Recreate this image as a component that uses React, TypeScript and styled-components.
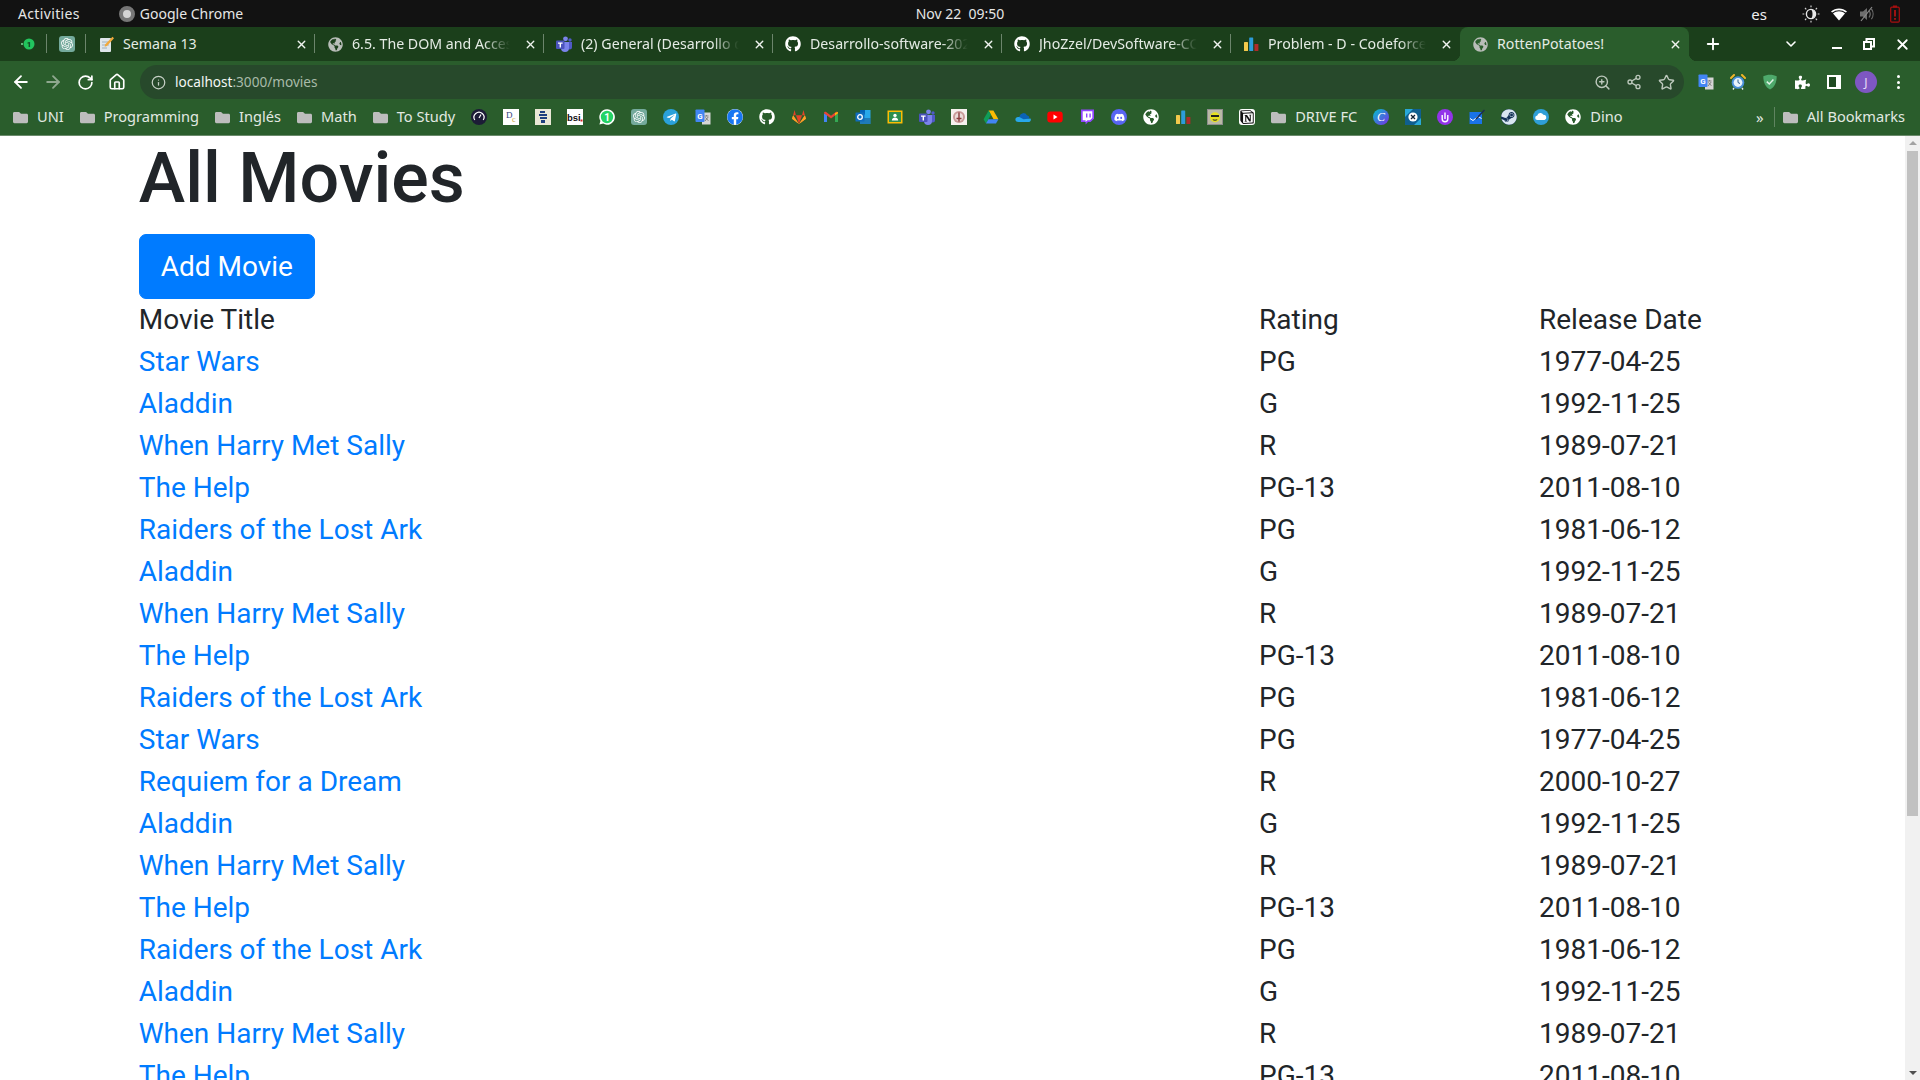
import React from "react";
import styled, { createGlobalStyle } from "styled-components";
import {
  FaDiscord,
  FaFacebook,
  FaFolder,
  FaGithub,
  FaGlobeAmericas,
  FaPuzzlePiece,
  FaSteam,
  FaTelegramPlane,
} from "react-icons/fa";
import { SiNotion, SiOpenai } from "react-icons/si";
import {
  ArrowLeft,
  ArrowRight,
  ChevronDown,
  Home,
  Info,
  Plus,
  RotateCw,
  Share2,
  Star,
  X,
  ZoomIn,
} from "lucide-react";

const GlobalStyle = createGlobalStyle`
  html, body {
    margin: 0;
    padding: 0;
    background: #fff;
    overflow: hidden;
  }
`;

const uiFont = `"Noto Sans", "Open Sans", sans-serif`;

const Screen = styled.div`
  width: 1920px;
  height: 1080px;
  display: flex;
  flex-direction: column;
  overflow: hidden;
  font-family: ${uiFont};
`;

/* ---- desktop top bar ---- */

const TopBar = styled.div`
  height: 27px;
  flex: none;
  display: grid;
  grid-template-columns: 1fr auto 1fr;
  align-items: center;
  background: #121212;
  color: #e6e6e6;
  font-size: 14px;
`;

const TopLeft = styled.div`
  display: flex;
  align-items: center;
  padding-left: 18px;
`;

const Activities = styled.span`
  letter-spacing: 0.35px;
`;

const AppName = styled.div`
  display: flex;
  align-items: center;
  gap: 5px;
  margin-left: 39px;
`;

const AppDot = styled.span`
  width: 16px;
  height: 16px;
  box-sizing: border-box;
  border-radius: 50%;
  background: #d4d4d4;
  border: 4px solid #777;
`;

const TopRight = styled.div`
  display: flex;
  align-items: center;
  justify-content: flex-end;
  padding-right: 11px;
`;

const Lang = styled.span`
  margin-right: 30px;
  color: #eee;
  font-size: 15px;
`;

const TrayIcon = styled.span`
  width: 28px;
  height: 18px;
  display: flex;
  align-items: center;
  justify-content: center;
`;

/* ---- tab strip ---- */

const TabStrip = styled.div`
  height: 34px;
  flex: none;
  display: flex;
  align-items: stretch;
  padding-left: 8px;
  background: #1b3f1b;
  color: #e4ebe4;
  font-size: 14.2px;
`;

const PinnedTab = styled.div`
  width: 39px;
  flex: none;
  display: flex;
  align-items: center;
  justify-content: center;
  position: relative;
  &::after {
    content: "";
    position: absolute;
    right: 0;
    top: 7px;
    bottom: 8px;
    width: 1px;
    background: #6c856c;
  }
`;

const Tab = styled.div<{ $active?: boolean; $last?: boolean }>`
  width: 229px;
  flex: none;
  box-sizing: border-box;
  display: flex;
  align-items: center;
  gap: 9px;
  padding: 0 6px 0 12px;
  position: relative;
  background: ${(p) => (p.$active ? "#2a5d2c" : "transparent")};
  border-radius: ${(p) => (p.$active ? "8px 8px 0 0" : "0")};

  &::after {
    content: "";
    display: ${(p) => (p.$last || p.$active ? "none" : "block")};
    position: absolute;
    right: 0;
    top: 7px;
    bottom: 8px;
    width: 1px;
    background: #6c856c;
  }
`;

const TabCorner = styled.span<{ $side: "left" | "right" }>`
  position: absolute;
  bottom: 0;
  ${(p) => p.$side}: -8px;
  width: 8px;
  height: 8px;
  background: radial-gradient(
    circle at ${(p) => (p.$side === "left" ? "0 0" : "100% 0")},
    transparent 8px,
    #2a5d2c 8.5px
  );
`;

const TabTitle = styled.span<{ $fade?: boolean }>`
  flex: 1;
  min-width: 0;
  padding-bottom: 2px;
  overflow: hidden;
  white-space: nowrap;
  ${(p) =>
    p.$fade &&
    `
    -webkit-mask-image: linear-gradient(to right, #000 82%, transparent 98%);
    mask-image: linear-gradient(to right, #000 82%, transparent 98%);
  `}
`;

const TabClose = styled.span`
  width: 16px;
  height: 16px;
  flex: none;
  display: flex;
  align-items: center;
  justify-content: center;
  color: #f0f4f0;
`;

const NewTab = styled.span`
  width: 30px;
  margin-left: 9px;
  display: flex;
  align-items: center;
  justify-content: center;
  color: #fff;
`;

const WindowControls = styled.div`
  margin-left: auto;
  display: flex;
  align-items: center;
  color: #fff;
`;

const WindowButton = styled.span<{ $width: number }>`
  width: ${(p) => p.$width}px;
  display: flex;
  align-items: center;
  justify-content: center;
`;

const MinimizeIcon = styled.span`
  width: 10px;
  height: 2px;
  margin-top: 7px;
  background: #fff;
`;

/* ---- address toolbar ---- */

const Toolbar = styled.div`
  height: 39px;
  flex: none;
  box-sizing: border-box;
  display: flex;
  align-items: flex-start;
  padding-top: 4px;
  background: #2a5d2c;
  color: #fff;
`;

const NavButton = styled.span<{ $dim?: boolean }>`
  width: 32px;
  height: 34px;
  flex: none;
  display: flex;
  align-items: center;
  justify-content: center;
  color: ${(p) => (p.$dim ? "#8fa88f" : "#fff")};
`;

const OmniAction = styled(NavButton)`
  color: inherit;
`;

const NavGroup = styled.div`
  display: flex;
  padding-left: 5px;
`;

const Omnibox = styled.div`
  width: 1544px;
  height: 34px;
  flex: none;
  margin-left: 7px;
  box-sizing: border-box;
  display: flex;
  align-items: center;
  padding-left: 10px;
  border-radius: 17px;
  background: #27492b;
  font-size: 13.6px;
  color: #a9bba9;
`;

const SiteInfo = styled.span`
  width: 16px;
  height: 16px;
  margin-right: 9px;
  display: flex;
  align-items: center;
  justify-content: center;
  color: #c6d0c6;
`;

const UrlText = styled.span`
  padding-bottom: 1px;
`;

const Host = styled.span`
  color: #f4f7f4;
`;

const OmniActions = styled.div`
  margin-left: auto;
  padding-right: 2px;
  display: flex;
  color: #bcc8bc;
`;

const Extensions = styled.div`
  display: flex;
  margin-left: 6px;
`;

const Avatar = styled.span`
  width: 22px;
  height: 22px;
  border-radius: 50%;
  background: #7e57c2;
  color: #e8def8;
  font-size: 12px;
  display: flex;
  align-items: center;
  justify-content: center;
`;

const SidePanelIcon = styled.span`
  width: 14px;
  height: 14px;
  box-sizing: border-box;
  background: #1f4a21;
  border: 2px solid #fff;
  border-right-width: 5px;
`;

const MenuDots = styled.span`
  display: flex;
  flex-direction: column;
  gap: 2.5px;
  & > i {
    width: 3px;
    height: 3px;
    border-radius: 50%;
    background: #fff;
  }
`;

/* ---- bookmarks ---- */

const Bookmarks = styled.div`
  height: 36px;
  flex: none;
  box-sizing: border-box;
  display: flex;
  align-items: center;
  padding: 0 7px 1px 5px;
  background: #2a5d2c;
  border-bottom: 1px solid #6a8a6b;
  color: #e2e9e2;
  font-size: 14.6px;
`;

const Bookmark = styled.span`
  display: flex;
  align-items: center;
  gap: 9px;
  padding: 0 8px;
  white-space: nowrap;
`;

const BookmarkLabel = styled.span`
  padding-bottom: 2px;
`;

const BookmarkIcon = styled.span`
  width: 32px;
  height: 16px;
  flex: none;
  display: flex;
  align-items: center;
  justify-content: center;
`;

const Folder = styled(FaFolder)`
  width: 15px;
  height: 15px;
  color: #bdbdbd;
  flex: none;
`;

const BookmarksEnd = styled.div`
  margin-left: auto;
  display: flex;
  align-items: center;
`;

const Chevrons = styled.span`
  width: 18px;
  text-align: center;
  font-size: 15px;
`;

const BarDivider = styled.span`
  width: 1px;
  height: 20px;
  margin: 0 0 0 5px;
  background: #5f8460;
`;

const Fav = styled.span`
  width: 16px;
  height: 16px;
  flex: none;
  display: flex;
  align-items: center;
  justify-content: center;
`;

const BadgeIcon = styled.span<{ $bg: string; $radius?: string }>`
  width: 16px;
  height: 16px;
  flex: none;
  display: flex;
  align-items: center;
  justify-content: center;
  color: #fff;
  background: ${(p) => p.$bg};
  border-radius: ${(p) => p.$radius ?? "50%"};
`;

/* ---- page ---- */

const Body = styled.div`
  flex: 1;
  min-height: 0;
  display: flex;
`;

const Page = styled.div`
  flex: 1;
  min-width: 0;
  overflow: hidden;
  background: #fff;
  font-family: Roboto, "Liberation Sans", sans-serif;
  color: #212529;
  font-size: 28px;
  line-height: 1.5;
`;

const Container = styled.div`
  width: 1680px;
  box-sizing: border-box;
  margin: 0 auto;
  padding: 0 26.25px;
`;

const Heading = styled.h1`
  margin: 0 0 14px;
  font-size: 70px;
  font-weight: 500;
  line-height: 1.2;
`;

const AddButton = styled.a`
  display: inline-block;
  vertical-align: top;
  padding: 10.5px 21px;
  border: 1.75px solid #007bff;
  border-radius: 7px;
  background: #007bff;
  color: #fff;
`;

const MovieTable = styled.table`
  width: 100%;
  table-layout: fixed;
  border-collapse: collapse;

  th,
  td {
    padding: 0;
    font-weight: 400;
    text-align: left;
    white-space: nowrap;
  }

  th:nth-child(1) {
    width: 1120.25px;
  }
  th:nth-child(2) {
    width: 280px;
  }
`;

const MovieLink = styled.a`
  color: #007bff;
`;

const Scrollbar = styled.div`
  width: 15px;
  flex: none;
  display: flex;
  flex-direction: column;
  align-items: center;
  background: #f1f1f1;
  position: relative;
`;

const ScrollArrow = styled.span<{ $down?: boolean }>`
  position: absolute;
  ${(p) => (p.$down ? "bottom: 5px;" : "top: 5px;")}
  width: 0;
  height: 0;
  border-left: 4px solid transparent;
  border-right: 4px solid transparent;
  ${(p) => (p.$down ? "border-top: 4px solid #505050;" : "border-bottom: 4px solid #a3a3a3;")}
`;

const ScrollThumb = styled.div`
  width: 11px;
  height: 665px;
  margin-top: 15px;
  background: #c1c1c1;
`;

/* ---- drawn icons ---- */

const Icon16: React.FC<{ children: React.ReactNode }> = ({ children }) => (
  <svg width="16" height="16" viewBox="0 0 16 16">
    {children}
  </svg>
);

const RestoreIcon = () => (
  <svg width="12" height="12" viewBox="0 0 12 12">
    <path d="M3.5 3V1h7.5v7.5H9" fill="none" stroke="#fff" strokeWidth="2" />
    <rect x="1" y="4" width="7" height="7" fill="none" stroke="#fff" strokeWidth="2" />
  </svg>
);

const ChatGpt = () => (
  <BadgeIcon $bg="#74aa9c" $radius="3px">
    <SiOpenai size={12} />
  </BadgeIcon>
);

const Teams = () => (
  <Icon16>
    <circle cx="9.5" cy="2.8" r="2.4" fill="#7b83eb" />
    <circle cx="14" cy="4" r="1.7" fill="#5059c9" />
    <path d="M11 6h5v5a2.5 2.5 0 0 1-5 0z" fill="#5059c9" />
    <path d="M5 6h8v6a4 4 0 0 1-8 0z" fill="#7b83eb" />
    <rect x="0" y="4.5" width="8.5" height="8.5" rx="1" fill="#4b53bc" />
    <path d="M2 6.5h4.6v1.2H5v3.9H3.6V7.7H2z" fill="#fff" />
  </Icon16>
);

const ChartBars = () => (
  <Icon16>
    <rect x="1" y="6" width="4" height="9" rx="0.6" fill="#f2c94c" />
    <rect x="6.2" y="1.5" width="4" height="13.5" rx="0.6" fill="#2d9cdb" />
    <rect x="11.4" y="8" width="4" height="7" rx="0.6" fill="#b02a2a" />
  </Icon16>
);

const Globe = () => <FaGlobeAmericas size={15} color="#b8bdb8" />;

const WhiteGlobe = () => <FaGlobeAmericas size={16} color="#fff" />;

const GTranslate = () => (
  <Icon16>
    <rect x="7" y="3.5" width="8.5" height="12" fill="#d6d6d6" />
    <path d="M9.5 7h4M11.5 6v1M10 12l3.2-4M10.4 8.4l3 3.4" stroke="#777" strokeWidth="0.9" fill="none" />
    <rect x="0.5" y="0.5" width="9" height="12.5" rx="0.8" fill="#4285f4" />
    <text x="5" y="10" textAnchor="middle" fontSize="8" fontWeight="700" fill="#fff" fontFamily="Roboto, sans-serif">
      G
    </text>
  </Icon16>
);

const Facebook = () => (
  <BadgeIcon $bg="#fff">
    <FaFacebook size={16} color="#1877f2" />
  </BadgeIcon>
);

const Gitlab = () => (
  <Icon16>
    <path d="M8 15 1 9.8l1.1-3.6z" fill="#fc6d26" />
    <path d="M8 15 15 9.8l-1.1-3.6z" fill="#fc6d26" />
    <path d="M8 15 4.9 6.2h6.2z" fill="#e24329" />
    <path d="M2.1 6.2 3.6 1l1.3 5.2z" fill="#e24329" />
    <path d="M13.9 6.2 12.4 1l-1.3 5.2z" fill="#e24329" />
    <path d="M1 9.8 8 15 2.1 6.2z" fill="#fca326" />
    <path d="M15 9.8 8 15l5.9-8.8z" fill="#fca326" />
  </Icon16>
);

const Gmail = () => (
  <Icon16>
    <path d="M1 13V4.2L4 6v7z" fill="#4285f4" />
    <path d="M15 13V4.2L12 6v7z" fill="#34a853" />
    <path d="M1 4.2C1 2.8 2.4 2.4 3.2 3L8 6.8 12.8 3c.8-.6 2.2-.2 2.2 1.2L12 6.5 8 9.6 4 6.5z" fill="#ea4335" />
    <path d="M12 6.5l3-2.3V2.9L12 4z" fill="#fbbc04" />
  </Icon16>
);

const Outlook = () => (
  <Icon16>
    <rect x="5" y="1" width="10.5" height="14" fill="#28a8ea" />
    <rect x="5" y="1" width="5" height="4.5" fill="#0364b8" />
    <path d="M5 9h10.5v6H5z" fill="#14447d" opacity="0.45" />
    <rect x="0.5" y="3.5" width="9" height="9" rx="0.6" fill="#0f6cbd" />
    <circle cx="5" cy="8" r="2.3" fill="none" stroke="#fff" strokeWidth="1.3" />
  </Icon16>
);

const Classroom = () => (
  <Icon16>
    <rect x="0.5" y="1.5" width="15" height="13" fill="#fbbc04" />
    <rect x="2" y="3" width="12" height="10" fill="#2f8f4e" />
    <circle cx="8" cy="6.4" r="1.7" fill="#fff" />
    <path d="M4.8 11.4c.3-2 1.6-2.8 3.2-2.8s2.9.8 3.2 2.8z" fill="#fff" />
  </Icon16>
);

const UniSeal = () => (
  <Icon16>
    <rect width="16" height="16" fill="#f6f1ee" />
    <circle cx="8" cy="8" r="6" fill="#c99a98" />
    <circle cx="8" cy="8" r="4" fill="#eadbd9" />
    <path d="M8 3.5v9M5.5 9.5h5" stroke="#8a3b3b" strokeWidth="1.4" />
  </Icon16>
);

const Drive = () => (
  <Icon16>
    <path d="M5.6 1.5h4.8l5 8.8h-4.8z" fill="#fbbc04" />
    <path d="M5.6 1.5.6 10.3 3 14.5l5-8.7z" fill="#0f9d58" />
    <path d="M3 14.5h10l2.4-4.2H5.4z" fill="#4285f4" />
  </Icon16>
);

const OneDrive = () => (
  <Icon16>
    <path d="M4.5 7.2a4 4 0 0 1 7.4-1 3 3 0 0 1 2.4 3.2L8 11 3.5 9z" fill="#0b63b6" />
    <path d="M3.6 13C1.8 13 .4 11.9.4 10.4S1.7 7.8 3.3 7.9c1-.1 1.9.2 2.8 1l2.5 1.4 6.8-.7c.5.3.6.9.4 1.6-.3.9-1.1 1.8-2.3 1.8z" fill="#28a8ea" />
  </Icon16>
);

const YouTube = () => (
  <Icon16>
    <rect x="0.3" y="2.5" width="15.4" height="11" rx="3" fill="#f00" />
    <path d="M6.5 5.6v4.8L10.5 8z" fill="#fff" />
  </Icon16>
);

const Twitch = () => (
  <Icon16>
    <path d="M2 .5h13v9.2L11.5 13H9l-2.4 2.4V13H2z" fill="#9146ff" />
    <path d="M3.7 2.2h9.6v6.7l-2.5 2.4H8.4L6.6 13v-1.7H3.7z" fill="#fff" />
    <path d="M7 4.4h1.4v4H7zM10.4 4.4h1.4v4h-1.4z" fill="#9146ff" />
  </Icon16>
);

const RoundBadge: React.FC<{ bg: string; children: React.ReactNode }> = ({ bg, children }) => (
  <Icon16>
    <circle cx="8" cy="8" r="8" fill={bg} />
    {children}
  </Icon16>
);

const Gauge = () => (
  <RoundBadge bg="#1c1c36">
    <path d="M3.8 11a5 5 0 1 1 8.4 0" fill="none" stroke="#fff" strokeWidth="1.2" />
    <path d="M8 9l2-3.5" stroke="#fff" strokeWidth="1.2" />
  </RoundBadge>
);

const Dc = () => (
  <Icon16>
    <rect width="16" height="16" fill="#fff" />
    <text x="3" y="9" fontSize="9" fill="#32427a" fontFamily="Liberation Serif, serif">
      D
    </text>
    <text x="9" y="13" fontSize="8" fill="#c7a43a" fontFamily="Liberation Serif, serif">
      c
    </text>
  </Icon16>
);

const Stack = () => (
  <Icon16>
    <rect width="16" height="16" fill="#e9e7d6" />
    <path d="M5 2h5v2H5zM4 5h8v2H4zM5 8h7v2H5zM6 11h4v3H6z" fill="#1f3f7f" />
  </Icon16>
);

const Bsi = () => (
  <Icon16>
    <rect width="16" height="16" fill="#fff" />
    <text x="0" y="12" fontSize="9.5" fontWeight="700" fill="#111" fontFamily="Liberation Sans, sans-serif">
      bsi
    </text>
    <rect x="13.5" y="10.5" width="2" height="2" fill="#d22" />
  </Icon16>
);

const WhatsApp = () => (
  <Icon16>
    <path d="M8 .3a7.7 7.7 0 0 0-6.6 11.6L.4 15.6l3.8-1A7.7 7.7 0 1 0 8 .3z" fill="#fff" />
    <circle cx="8" cy="8" r="6.2" fill="#25d366" />
    <text x="8" y="11.5" textAnchor="middle" fontSize="10" fontWeight="700" fill="#fff" fontFamily="Roboto, sans-serif">
      1
    </text>
  </Icon16>
);

const NotifyDot = () => (
  <Icon16>
    <circle cx="9" cy="8" r="5.5" fill="#22c55e" />
    <circle cx="2" cy="8" r="1" fill="#7ddc9a" />
    <text x="9" y="11" textAnchor="middle" fontSize="8" fontWeight="700" fill="#0d3d1b" fontFamily="Roboto, sans-serif">
      1
    </text>
  </Icon16>
);

const Notepad = () => (
  <Icon16>
    <rect x="2" y="2" width="11" height="14" rx="1" fill="#dfe6ea" />
    <path d="M4 6h7M4 9h7M4 12h5" stroke="#9fb0ba" strokeWidth="1" />
    <path d="M14.5.8 16 2.3 9 10l-2.4.8.7-2.5z" fill="#f2a93b" />
  </Icon16>
);

const FaceBox = () => (
  <Icon16>
    <rect width="16" height="16" fill="#8d8d8d" />
    <rect x="1" y="1" width="14" height="14" fill="#b9b9a5" />
    <circle cx="8" cy="8.2" r="5" fill="#e6e020" />
    <rect x="4" y="6" width="8" height="2" fill="#222" />
    <path d="M5.8 10.6c1.4.8 3 .8 4.4 0" stroke="#222" fill="none" />
  </Icon16>
);

const Canva = () => (
  <Icon16>
    <defs>
      <linearGradient id="canva" x1="0" y1="0" x2="1" y2="1">
        <stop offset="0" stopColor="#00c4cc" />
        <stop offset="1" stopColor="#7d2ae8" />
      </linearGradient>
    </defs>
    <circle cx="8" cy="8" r="8" fill="url(#canva)" />
    <text x="8" y="12" textAnchor="middle" fontSize="12" fontStyle="italic" fill="#fff" fontFamily="Liberation Serif, serif">
      C
    </text>
  </Icon16>
);

const XBox = () => (
  <Icon16>
    <rect width="16" height="16" fill="#0f5f8f" />
    <path d="M0 0h8L0 8zM16 16H9l7-7z" fill="#29a8d8" />
    <circle cx="8" cy="8" r="4.6" fill="#fff" />
    <path d="M6 6l4 4M10 6l-4 4" stroke="#123" strokeWidth="1.3" />
  </Icon16>
);

const Upword = () => (
  <RoundBadge bg="#9333ea">
    <path d="M5.2 6v4a2.8 2.8 0 0 0 5.6 0V6" fill="none" stroke="#fff" strokeWidth="1.4" />
    <path d="M8 3.5V10" stroke="#fff" strokeWidth="1.4" />
  </RoundBadge>
);

const TaskBox = () => (
  <Icon16>
    <rect x="0.5" y="3" width="12.5" height="12" fill="#1a73e8" />
    <path d="M1 9.5l3 2 5-4 3.5 2" fill="none" stroke="#fff" strokeWidth="1" />
    <path d="M7 10 15.5 1" stroke="#1d2b4f" strokeWidth="1.4" />
  </Icon16>
);

const SteamRound = () => (
  <BadgeIcon $bg="#123257">
    <FaSteam size={16} color="#d8e6f0" />
  </BadgeIcon>
);

const CloudRound = () => (
  <RoundBadge bg="#2f9fd8">
    <path d="M4.5 11a2.2 2.2 0 0 1-.2-4.4 3.2 3.2 0 0 1 6-.8 2.7 2.7 0 0 1 1.3 5.2z" fill="#fff" />
  </RoundBadge>
);

const NotionBox = () => (
  <BadgeIcon $bg="#fff" $radius="3px">
    <SiNotion size={14} color="#111" />
  </BadgeIcon>
);

const Alarm = () => (
  <Icon16>
    <path d="M1 4l3-3M15 4l-3-3" stroke="#f0b429" strokeWidth="2" strokeLinecap="round" />
    <path d="M4 14l-1 1.5M12 14l1 1.5" stroke="#e6eef5" strokeWidth="1.4" />
    <circle cx="8" cy="8.5" r="6.3" fill="#4a90d9" />
    <circle cx="8" cy="8.5" r="4.4" fill="#eaf3fb" />
    <path d="M8 5.5v3l2 1" stroke="#2c5f8f" strokeWidth="1" fill="none" />
  </Icon16>
);

const Shield = () => (
  <Icon16>
    <path d="M8 .7C5.6.7 3 1.3 1.3 2.3 1.3 9 3.6 13.4 8 15.5c4.4-2.1 6.7-6.5 6.7-13.2C13 1.3 10.4.7 8 .7z" fill="#4ea96b" />
    <path d="M4.8 7.6 7.3 10l4.1-4.4" fill="none" stroke="#dff3e5" strokeWidth="1.5" />
  </Icon16>
);

const SunMoon = () => (
  <svg width="18" height="18" viewBox="0 0 18 18">
    <circle cx="9" cy="9" r="4.6" fill="none" stroke="#e8e8e8" strokeWidth="1.4" />
    <path d="M9 4.4a4.6 4.6 0 0 1 0 9.2c2-1.5 2-7.7 0-9.2z" fill="#e8e8e8" />
    <path
      d="M9 .5v1.8M9 15.7v1.8M.5 9h1.8M15.7 9h1.8M3 3l1.3 1.3M13.7 13.7 15 15M3 15l1.3-1.3M13.7 4.3 15 3"
      stroke="#cfcfcf"
      strokeWidth="1.2"
    />
  </svg>
);

const WifiFan = () => (
  <svg width="18" height="14" viewBox="0 0 18 14">
    <path d="M1 4.4C5.5.4 12.5.4 17 4.4L15.9 5.6C11.9 2.3 6.1 2.3 2.1 5.6z" fill="#fff" />
    <path d="M3 6.4c3.6-2.8 8.4-2.8 12 0L9 13.4z" fill="#fff" />
  </svg>
);

const MutedSpeaker = () => (
  <svg width="16" height="16" viewBox="0 0 16 16">
    <path d="M1 5.5h3L8 2v12l-4-3.5H1z" fill="#6e6e6e" />
    <path d="M10 4.5c1.4 2 1.4 5 0 7M12.4 2.8c2.2 3 2.2 7.4 0 10.4" fill="none" stroke="#6e6e6e" strokeWidth="1.2" />
    <path d="M2 15 13 1" stroke="#8a8a8a" strokeWidth="1.2" />
  </svg>
);

const Battery = () => (
  <svg width="10" height="18" viewBox="0 0 10 18">
    <rect x="3" y="0.5" width="4" height="2" fill="#a80f0f" />
    <rect x="0.7" y="2.2" width="8.6" height="15" rx="1.2" fill="none" stroke="#a80f0f" strokeWidth="1.2" />
    <rect x="4.2" y="5" width="1.6" height="6.5" fill="#c01212" />
    <rect x="4.2" y="13" width="1.6" height="1.8" fill="#c01212" />
  </svg>
);

/* ---- data ---- */

const tabs: { title: string; icon: React.ReactNode; fade?: boolean }[] = [
  { title: "Semana 13", icon: <Notepad /> },
  { title: "6.5. The DOM and Accessing Elements", icon: <Globe />, fade: true },
  { title: "(2) General (Desarrollo de Software)", icon: <Teams />, fade: true },
  { title: "Desarrollo-software-2023/Semana", icon: <FaGithub size={16} color="#fff" />, fade: true },
  { title: "JhoZzel/DevSoftware-CC3S2-A", icon: <FaGithub size={16} color="#fff" />, fade: true },
  { title: "Problem - D - Codeforces Round", icon: <ChartBars />, fade: true },
];

const leadingFolders = ["UNI", "Programming", "Inglés", "Math", "To Study"];

const middleIcons: React.ReactNode[] = [
  <Gauge />,
  <Dc />,
  <Stack />,
  <Bsi />,
  <WhatsApp />,
  <ChatGpt />,
  <BadgeIcon $bg="#2aa1da">
    <FaTelegramPlane size={11} />
  </BadgeIcon>,
  <GTranslate />,
  <Facebook />,
  <FaGithub size={16} color="#fff" />,
  <Gitlab />,
  <Gmail />,
  <Outlook />,
  <Classroom />,
  <Teams />,
  <UniSeal />,
  <Drive />,
  <OneDrive />,
  <YouTube />,
  <Twitch />,
  <BadgeIcon $bg="#5865f2">
    <FaDiscord size={11} />
  </BadgeIcon>,
  <WhiteGlobe />,
  <ChartBars />,
  <FaceBox />,
  <NotionBox />,
];

const trailingIcons: React.ReactNode[] = [
  <Canva />,
  <XBox />,
  <Upword />,
  <TaskBox />,
  <SteamRound />,
  <CloudRound />,
];

const STAR_WARS = ["Star Wars", "PG", "1977-04-25"];
const ALADDIN = ["Aladdin", "G", "1992-11-25"];
const HARRY = ["When Harry Met Sally", "R", "1989-07-21"];
const HELP = ["The Help", "PG-13", "2011-08-10"];
const RAIDERS = ["Raiders of the Lost Ark", "PG", "1981-06-12"];
const REQUIEM = ["Requiem for a Dream", "R", "2000-10-27"];

const movies = [
  STAR_WARS, ALADDIN, HARRY, HELP, RAIDERS,
  ALADDIN, HARRY, HELP, RAIDERS, STAR_WARS,
  REQUIEM, ALADDIN, HARRY, HELP, RAIDERS,
  ALADDIN, HARRY, HELP,
];

const App: React.FC = () => (
  <>
    <GlobalStyle />
    <Screen>
      <TopBar>
        <TopLeft>
          <Activities>Activities</Activities>
          <AppName>
            <AppDot />
            Google Chrome
          </AppName>
        </TopLeft>
        <span>Nov 22&nbsp; 09:50</span>
        <TopRight>
          <Lang>es</Lang>
          <TrayIcon>
            <SunMoon />
          </TrayIcon>
          <TrayIcon>
            <WifiFan />
          </TrayIcon>
          <TrayIcon>
            <MutedSpeaker />
          </TrayIcon>
          <TrayIcon>
            <Battery />
          </TrayIcon>
        </TopRight>
      </TopBar>

      <TabStrip>
        <PinnedTab>
          <NotifyDot />
        </PinnedTab>
        <PinnedTab>
          <ChatGpt />
        </PinnedTab>
        {tabs.map((tab) => (
          <Tab key={tab.title} $last={tab === tabs[tabs.length - 1]}>
            <Fav>{tab.icon}</Fav>
            <TabTitle $fade={tab.fade}>{tab.title}</TabTitle>
            <TabClose>
              <X size={13} strokeWidth={2.5} />
            </TabClose>
          </Tab>
        ))}
        <Tab $active>
          <TabCorner $side="left" />
          <Fav>
            <Globe />
          </Fav>
          <TabTitle>RottenPotatoes!</TabTitle>
          <TabClose>
            <X size={13} strokeWidth={2.5} />
          </TabClose>
          <TabCorner $side="right" />
        </Tab>
        <NewTab>
          <Plus size={18} strokeWidth={2.5} />
        </NewTab>
        <WindowControls>
          <WindowButton $width={60}>
            <ChevronDown size={16} strokeWidth={2.4} />
          </WindowButton>
          <WindowButton $width={32}>
            <MinimizeIcon />
          </WindowButton>
          <WindowButton $width={32}>
            <RestoreIcon />
          </WindowButton>
          <WindowButton $width={35}>
            <X size={17} strokeWidth={2.5} />
          </WindowButton>
        </WindowControls>
      </TabStrip>

      <Toolbar>
        <NavGroup>
          <NavButton>
            <ArrowLeft size={20} strokeWidth={2.2} />
          </NavButton>
          <NavButton $dim>
            <ArrowRight size={20} strokeWidth={2.2} />
          </NavButton>
          <NavButton>
            <RotateCw size={17} strokeWidth={2.4} />
          </NavButton>
          <NavButton>
            <Home size={18} strokeWidth={2.2} />
          </NavButton>
        </NavGroup>
        <Omnibox>
          <SiteInfo>
            <Info size={15} />
          </SiteInfo>
          <UrlText>
            <Host>localhost</Host>:3000/movies
          </UrlText>
          <OmniActions>
            <OmniAction>
              <ZoomIn size={17} />
            </OmniAction>
            <OmniAction>
              <Share2 size={16} />
            </OmniAction>
            <OmniAction>
              <Star size={17} />
            </OmniAction>
          </OmniActions>
        </Omnibox>
        <Extensions>
          <NavButton>
            <GTranslate />
          </NavButton>
          <NavButton>
            <Alarm />
          </NavButton>
          <NavButton>
            <Shield />
          </NavButton>
          <NavButton>
            <FaPuzzlePiece size={15} />
          </NavButton>
          <NavButton>
            <SidePanelIcon />
          </NavButton>
          <NavButton>
            <Avatar>J</Avatar>
          </NavButton>
          <NavButton>
            <MenuDots>
              <i />
              <i />
              <i />
            </MenuDots>
          </NavButton>
        </Extensions>
      </Toolbar>

      <Bookmarks>
        {leadingFolders.map((name) => (
          <Bookmark key={name}>
            <Folder />
            <BookmarkLabel>{name}</BookmarkLabel>
          </Bookmark>
        ))}
        {middleIcons.map((icon, i) => (
          <BookmarkIcon key={i}>{icon}</BookmarkIcon>
        ))}
        <Bookmark>
          <Folder />
          <BookmarkLabel>DRIVE FC</BookmarkLabel>
        </Bookmark>
        {trailingIcons.map((icon, i) => (
          <BookmarkIcon key={i}>{icon}</BookmarkIcon>
        ))}
        <Bookmark>
          <FaGlobeAmericas size={16} color="#fff" />
          <BookmarkLabel>Dino</BookmarkLabel>
        </Bookmark>
        <BookmarksEnd>
          <Chevrons>»</Chevrons>
          <BarDivider />
          <Bookmark>
            <Folder />
            <BookmarkLabel>All Bookmarks</BookmarkLabel>
          </Bookmark>
        </BookmarksEnd>
      </Bookmarks>

      <Body>
        <Page>
          <Container>
            <Heading>All Movies</Heading>
            <AddButton>Add Movie</AddButton>
            <MovieTable>
              <thead>
                <tr>
                  <th>Movie Title</th>
                  <th>Rating</th>
                  <th>Release Date</th>
                </tr>
              </thead>
              <tbody>
                {movies.map(([title, rating, date], i) => (
                  <tr key={i}>
                    <td>
                      <MovieLink>{title}</MovieLink>
                    </td>
                    <td>{rating}</td>
                    <td>{date}</td>
                  </tr>
                ))}
              </tbody>
            </MovieTable>
          </Container>
        </Page>
        <Scrollbar>
          <ScrollArrow />
          <ScrollThumb />
          <ScrollArrow $down />
        </Scrollbar>
      </Body>
    </Screen>
  </>
);

export default App;
